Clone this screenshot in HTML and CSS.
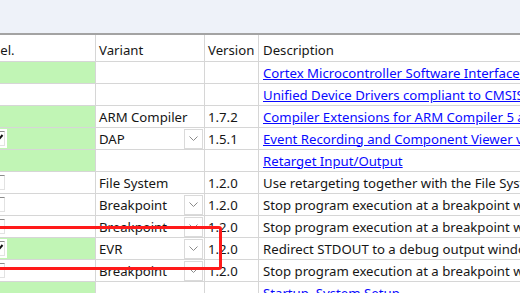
FILE: index.html
```
<!DOCTYPE html>
<html lang="en">
<head>
    <meta charset="UTF-8">
    <title>Run-Time Environment</title>
    <link rel="stylesheet" href="styles.css">
</head>
<body>

<div class="toolbar"></div>

<div class="grid">
    <div class="row head">
        <div class="cell sel">Sel.</div>
        <div class="cell">Variant</div>
        <div class="cell">Version</div>
        <div class="cell">Description</div>
    </div>

    <div class="row">
        <div class="cell sel ok"></div>
        <div class="cell"></div>
        <div class="cell"></div>
        <div class="cell"><a href="#">Cortex Microcontroller Software Interface Components</a></div>
    </div>
    <div class="row">
        <div class="cell sel"></div>
        <div class="cell"></div>
        <div class="cell"></div>
        <div class="cell"><a href="#">Unified Device Drivers compliant to CMSIS-Driver Specifications</a></div>
    </div>
    <div class="row">
        <div class="cell sel ok"></div>
        <div class="cell">ARM Compiler</div>
        <div class="cell">1.7.2</div>
        <div class="cell"><a href="#">Compiler Extensions for ARM Compiler 5 and ARM Compiler 6</a></div>
    </div>
    <div class="row">
        <div class="cell sel ok"><span class="check on"><svg width="11" height="11" viewBox="0 0 11 11"><path d="M2 5.5 L4.5 8 L9.5 2" fill="none" stroke="#111" stroke-width="2"/></svg></span></div>
        <div class="cell variant"><span class="name">DAP</span><span class="drop"><svg width="9" height="5" viewBox="0 0 9 5"><path d="M0.5 0.5 L4.5 4.5 L8.5 0.5" fill="none" stroke="#8a8a8a" stroke-width="1"/></svg></span></div>
        <div class="cell">1.5.1</div>
        <div class="cell"><a href="#">Event Recording and Component Viewer via DAP</a></div>
    </div>
    <div class="row">
        <div class="cell sel ok"></div>
        <div class="cell"></div>
        <div class="cell"></div>
        <div class="cell"><a href="#">Retarget Input/Output</a></div>
    </div>
    <div class="row">
        <div class="cell sel"><span class="check"></span></div>
        <div class="cell">File System</div>
        <div class="cell">1.2.0</div>
        <div class="cell">Use retargeting together with the File System component</div>
    </div>
    <div class="row">
        <div class="cell sel"><span class="check"></span></div>
        <div class="cell variant"><span class="name">Breakpoint</span><span class="drop"><svg width="9" height="5" viewBox="0 0 9 5"><path d="M0.5 0.5 L4.5 4.5 L8.5 0.5" fill="none" stroke="#8a8a8a" stroke-width="1"/></svg></span></div>
        <div class="cell">1.2.0</div>
        <div class="cell">Stop program execution at a breakpoint when using STDERR</div>
    </div>
    <div class="row">
        <div class="cell sel"><span class="check"></span></div>
        <div class="cell variant"><span class="name">Breakpoint</span><span class="drop"><svg width="9" height="5" viewBox="0 0 9 5"><path d="M0.5 0.5 L4.5 4.5 L8.5 0.5" fill="none" stroke="#8a8a8a" stroke-width="1"/></svg></span></div>
        <div class="cell">1.2.0</div>
        <div class="cell">Stop program execution at a breakpoint when using STDIN</div>
    </div>
    <div class="row">
        <div class="cell sel ok"><span class="check on"><svg width="11" height="11" viewBox="0 0 11 11"><path d="M2 5.5 L4.5 8 L9.5 2" fill="none" stroke="#111" stroke-width="2"/></svg></span></div>
        <div class="cell variant"><span class="name">EVR</span><span class="drop"><svg width="9" height="5" viewBox="0 0 9 5"><path d="M0.5 0.5 L4.5 4.5 L8.5 0.5" fill="none" stroke="#8a8a8a" stroke-width="1"/></svg></span></div>
        <div class="cell">1.2.0</div>
        <div class="cell">Redirect STDOUT to a debug output window using Event Recorder</div>
    </div>
    <div class="row">
        <div class="cell sel"><span class="check"></span></div>
        <div class="cell variant"><span class="name">Breakpoint</span><span class="drop"><svg width="9" height="5" viewBox="0 0 9 5"><path d="M0.5 0.5 L4.5 4.5 L8.5 0.5" fill="none" stroke="#8a8a8a" stroke-width="1"/></svg></span></div>
        <div class="cell">1.2.0</div>
        <div class="cell">Stop program execution at a breakpoint when using TTY</div>
    </div>
    <div class="row">
        <div class="cell sel ok"></div>
        <div class="cell"></div>
        <div class="cell"></div>
        <div class="cell"><a href="#">Startup, System Setup</a></div>
    </div>

    <!-- annotation drawn over the list -->
    <div class="mark"></div>
</div>

</body>
</html>
```

FILE: styles.css
```
body {
    margin: 0;
    background: #fff;
    overflow: hidden;
    font-family: "Noto Sans", "Open Sans", sans-serif;
    font-size: 13.2px;
    color: #161616;
}

.toolbar {
    height: 33px;
    background: #eef2f9;
    border-bottom: 2px solid #a3a3a3;
}

.grid {
    position: relative;
    margin-left: -10px;
    width: 720px;
}

.row {
    display: grid;
    grid-template-columns: 106px 109px 54px 1fr;
    height: 22px;
    box-sizing: border-box;
    border-bottom: 1px solid #d6d6d6;
}

.row.head {
    height: 27px;
}

.row.head .cell {
    padding-top: 3px;
}

.cell {
    display: flex;
    align-items: center;
    padding: 0 3px;
    border-right: 1px solid #d6d6d6;
    white-space: nowrap;
    overflow: hidden;
    min-width: 0;
}

.cell:last-child {
    border-right: none;
    padding-left: 4px;
}

.sel.ok {
    background: #c1f5b5;
}

.check {
    width: 11px;
    height: 13px;
    margin-left: -1px;
    border: 1px solid;
    border-color: #8c8c8c #e2e2e2 #e2e2e2 #8c8c8c;
    background: #fff;
    box-shadow: 0 0 0 2px #fff;
    display: flex;
    align-items: center;
    justify-content: center;
}

.variant {
    padding-right: 1px;
}

.name {
    flex: 1;
}

.drop {
    width: 17px;
    height: 18px;
    border: 1px solid #dadada;
    display: flex;
    align-items: center;
    justify-content: center;
}

a {
    color: #0a0aff;
}

.mark {
    position: absolute;
    left: -10px;
    top: 191px;
    width: 242px;
    height: 44px;
    box-sizing: border-box;
    border: 3px solid #ff1a1a;
    border-radius: 3px;
}
```
